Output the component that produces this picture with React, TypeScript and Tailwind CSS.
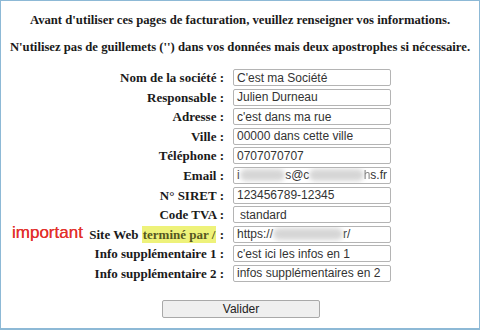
const rows: { label: string; value: React.ReactNode }[] = [
  { label: "Nom de la société :", value: "C'est ma Société" },
  { label: "Responsable :", value: "Julien Durneau" },
  { label: "Adresse :", value: "c'est dans ma rue" },
  { label: "Ville :", value: "00000 dans cette ville" },
  { label: "Téléphone :", value: "0707070707" },
  {
    label: "Email :",
    value: (
      <>
        i<Blur w="w-[52px]" />s@c<Blur w="w-[62px]" />
        <span className="opacity-60">h</span>s.fr
      </>
    ),
  },
  { label: "N° SIRET :", value: "123456789-12345" },
  { label: "Code TVA :", value: <span className="pl-[3px]">standard</span> },
  {
    label: "SITE",
    value: (
      <>
        https://<Blur w="w-[70px]" />r/
      </>
    ),
  },
  { label: "Info supplémentaire 1 :", value: "c'est ici les infos en 1" },
  { label: "Info supplémentaire 2 :", value: "infos supplémentaires en 2" },
];

function Blur({ w }: { w: string }) {
  return <span className={`inline-block h-[12px] ${w} rounded-full bg-[#d6d6d6] blur-[2.5px] align-middle`} />;
}

export default function App() {
  return (
    <div className="relative w-[480px] h-[330px] bg-white border border-b-2 border-[#8db9d6] overflow-hidden">
      <div className="flex flex-col items-center pt-[11px] font-['Liberation_Serif',serif] font-bold text-[12.7px] text-[#1a1a1a] leading-[16px]">
        <p>Avant d'utiliser ces pages de facturation, veuillez renseigner vos informations.</p>
        <p className="mt-[11px]">N'utilisez pas de guillemets ('') dans vos données mais deux apostrophes si nécessaire.</p>
      </div>

      <div className="mt-[14px] ml-[23px] grid grid-cols-[200px_158px] auto-rows-[17px] gap-x-[9px] gap-y-[2.6px]">
        {rows.map((r) => (
          <div key={r.label} className="contents">
            <div className="h-[17px] flex items-center justify-end font-['Liberation_Serif',serif] font-bold text-[13px] leading-[17px] text-[#1a1a1a] whitespace-nowrap">
              {r.label === "SITE" ? (
                <>
                  Site Web&nbsp;
                  <span className="bg-[#eef27a] text-[#55561f] px-[1px]">terminé par /</span>
                  &nbsp;:
                </>
              ) : (
                r.label
              )}
            </div>
            <div className="h-[17px] border border-[#b4b4b4] rounded-[2px] px-[3px] flex items-center font-['Liberation_Sans',sans-serif] text-[12px] text-[#333] whitespace-nowrap overflow-hidden">
              {r.value}
            </div>
          </div>
        ))}
      </div>

      <div className="mt-[13px] ml-[161px]">
        <button className="w-[158px] h-[18px] bg-[#efefef] border border-[#a9a9a9] rounded-[2px] font-['Liberation_Sans',sans-serif] text-[12px] text-[#222] leading-none">
          Valider
        </button>
      </div>

      <span className="absolute left-[11px] top-[223px] font-['Liberation_Sans',sans-serif] text-[17px] text-[#e2312c] leading-none [text-shadow:0_0_0.5px_#e2312c]">
        important
      </span>
    </div>
  );
}
